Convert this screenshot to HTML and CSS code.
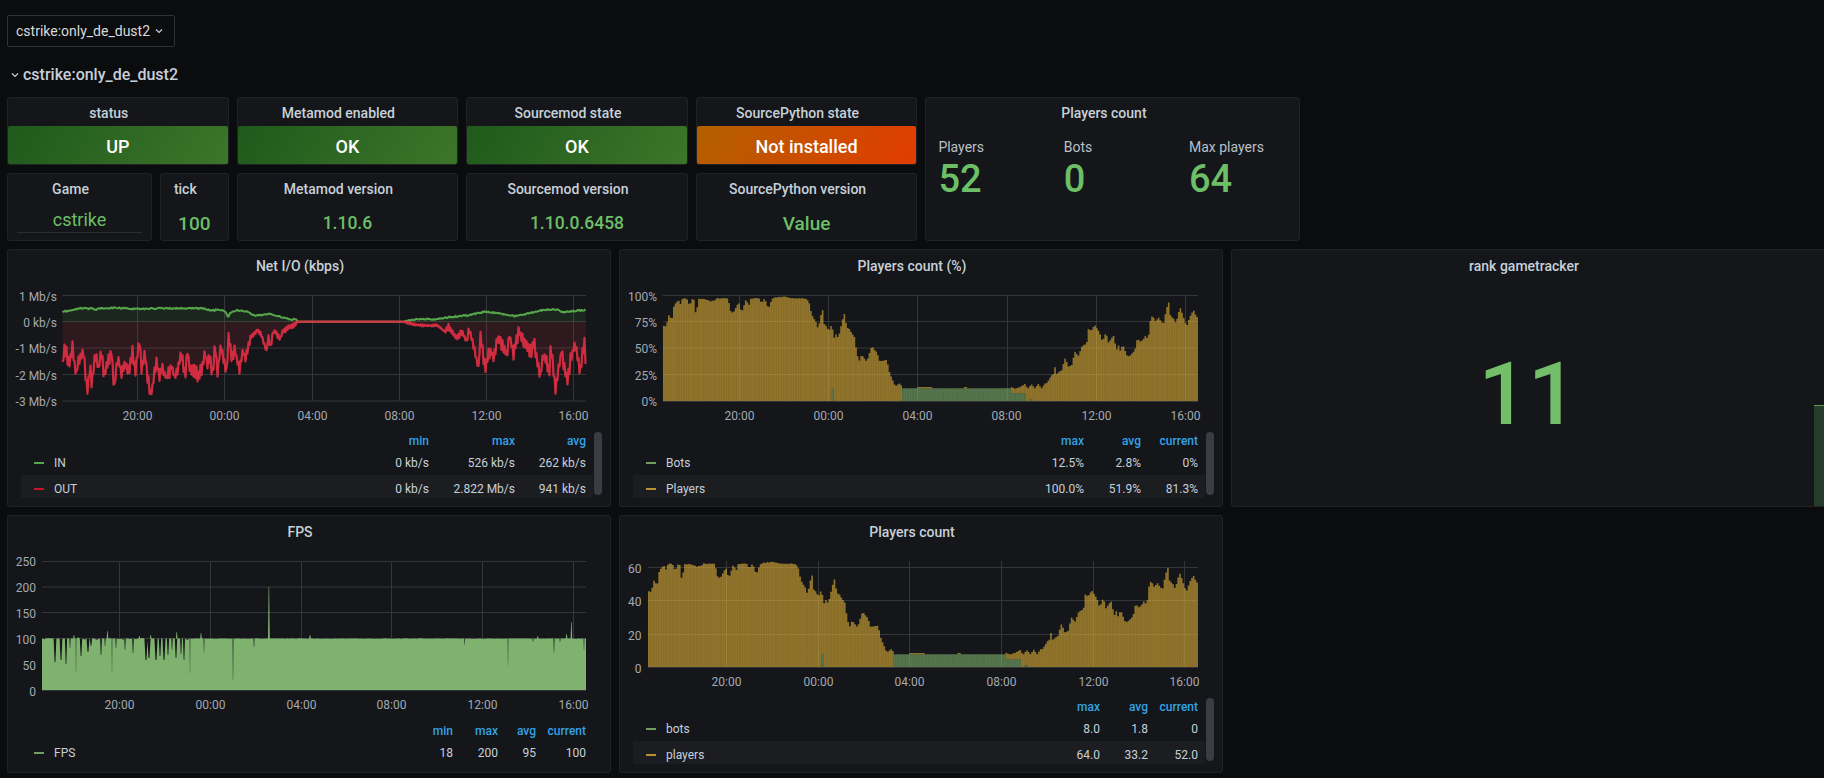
FILE: index.html
```html
<!DOCTYPE html>
<html lang="en">
<head>
<meta charset="utf-8">
<title>cstrike:only_de_dust2</title>
<link rel="stylesheet" href="styles.css">
</head>
<body>
<main class="dash">
  <div class="var-bar">
    <div class="dropdown">cstrike:only_de_dust2
      <svg class="chev" viewBox="0 0 8 6"><path d="M1 1.5 4 4.5 7 1.5"/></svg>
    </div>
  </div>
  <div class="row-title">
    <svg class="chev" viewBox="0 0 8 6"><path d="M1 1.5 4 4.5 7 1.5"/></svg>
    <span>cstrike:only_de_dust2</span>
  </div>

  <section class="stats">
    <div class="panel"><h2 class="title">status</h2><div class="fill ok">UP</div></div>
    <div class="panel"><h2 class="title">Metamod enabled</h2><div class="fill ok">OK</div></div>
    <div class="panel"><h2 class="title">Sourcemod state</h2><div class="fill ok">OK</div></div>
    <div class="panel"><h2 class="title">SourcePython state</h2><div class="fill warn">Not installed</div></div>
    <div class="panel players">
      <h2 class="title">Players count</h2>
      <div class="multi">
        <div class="multi-item"><div class="multi-label">Players</div><div class="multi-num">52</div></div>
        <div class="multi-item"><div class="multi-label">Bots</div><div class="multi-num">0</div></div>
        <div class="multi-item"><div class="multi-label">Max players</div><div class="multi-num">64</div></div>
      </div>
    </div>
    <div class="pair">
      <div class="panel game"><h2 class="title">Game</h2><div class="game-val">cstrike</div></div>
      <div class="panel tick"><h2 class="title">tick</h2><div class="val">100</div></div>
    </div>
    <div class="panel"><h2 class="title">Metamod version</h2><div class="val val-sm">1.10.6</div></div>
    <div class="panel"><h2 class="title">Sourcemod version</h2><div class="val val-sm">1.10.0.6458</div></div>
    <div class="panel"><h2 class="title">SourcePython version</h2><div class="val">Value</div></div>
  </section>

  <section class="chart-row">
    <div class="panel chart">
      <h2 class="title">Net I/O (kbps)</h2>
      <svg class="plot" viewBox="8 282 602 145" width="602" height="145">
        <path class="grid" d="M62.5 295.5H586M62.5 321.5H586M62.5 348H586M62.5 374.5H586M62.5 401H586M137.5 295V401M224.5 295V401M312.5 295V401M399.5 295V401M486.5 295V401M573.5 295V401"/>
        <path id="net-in-fill" class="in-fill"/><path id="net-out-fill" class="out-fill"/>
        <path id="net-in" class="in-line"/><path id="net-out" class="out-line"/>
        <g class="yaxis">
          <text x="57" y="300.5">1 Mb/s</text><text x="57" y="327">0 kb/s</text><text x="57" y="353">-1 Mb/s</text><text x="57" y="380">-2 Mb/s</text><text x="57" y="406">-3 Mb/s</text>
        </g>
        <g class="xaxis">
          <text x="137.5" y="420">20:00</text><text x="224.5" y="420">00:00</text><text x="312.5" y="420">04:00</text><text x="399.5" y="420">08:00</text><text x="486.5" y="420">12:00</text><text x="573.5" y="420">16:00</text>
        </g>
      </svg>
      <div class="legend lg-net">
        <div class="lg-row lg-head"><span></span><span>min</span><span>max</span><span>avg</span></div>
        <div class="lg-row"><span class="lg-name"><i class="dash-mark c-in"></i>IN</span><span>0 kb/s</span><span>526 kb/s</span><span>262 kb/s</span></div>
        <div class="lg-row lg-alt"><span class="lg-name"><i class="dash-mark c-out"></i>OUT</span><span>0 kb/s</span><span>2.822 Mb/s</span><span>941 kb/s</span></div>
        <div class="scroll"></div>
      </div>
    </div>

    <div class="panel chart">
      <h2 class="title">Players count (%)</h2>
      <svg class="plot" viewBox="620 282 602 145" width="602" height="145">
        <path class="grid" d="M663 295.5H1198M663 321.5H1198M663 348H1198M663 374.5H1198M739.5 295V401.7M828.5 295V401.7M917.5 295V401.7M1007.5 295V401.7M1096.5 295V401.7M1185.5 295V401.7"/>
        <path id="pct-bots" class="bots-bars"/><path id="pct-players" class="players-bars"/>
        <path class="grid" d="M663 401.5H1198"/>
        <g class="yaxis">
          <text x="657" y="300.5">100%</text><text x="657" y="327">75%</text><text x="657" y="353">50%</text><text x="657" y="380">25%</text><text x="657" y="406">0%</text>
        </g>
        <g class="xaxis">
          <text x="739.5" y="420">20:00</text><text x="828.5" y="420">00:00</text><text x="917.5" y="420">04:00</text><text x="1006.5" y="420">08:00</text><text x="1096.5" y="420">12:00</text><text x="1185.5" y="420">16:00</text>
        </g>
      </svg>
      <div class="legend lg-pct">
        <div class="lg-row lg-head"><span></span><span>max</span><span>avg</span><span>current</span></div>
        <div class="lg-row"><span class="lg-name"><i class="dash-mark c-bots"></i>Bots</span><span>12.5%</span><span>2.8%</span><span>0%</span></div>
        <div class="lg-row lg-alt"><span class="lg-name"><i class="dash-mark c-players"></i>Players</span><span>100.0%</span><span>51.9%</span><span>81.3%</span></div>
        <div class="scroll"></div>
      </div>
    </div>

    <div class="panel chart rank">
      <h2 class="title">rank gametracker</h2>
      <div class="rank-val">11</div>
      <div class="spark"></div>
    </div>
  </section>

  <section class="chart-row">
    <div class="panel chart">
      <h2 class="title">FPS</h2>
      <svg class="plot" viewBox="8 548 602 169" width="602" height="169">
        <path class="grid" d="M42 561.5H586M42 587H586M42 612.5H586M42 638.5H586M119.5 561V690M210.5 561V690M301.5 561V690M391.5 561V690M482.5 561V690M573.5 561V690"/>
        <path id="fps" class="fps-fill"/>
        <path class="grid" d="M42 690.5H586"/>
        <g class="yaxis">
          <text x="36" y="566">250</text><text x="36" y="592">200</text><text x="36" y="618">150</text><text x="36" y="644">100</text><text x="36" y="670">50</text><text x="36" y="696">0</text>
        </g>
        <g class="xaxis">
          <text x="119.5" y="709">20:00</text><text x="210.5" y="709">00:00</text><text x="301.5" y="709">04:00</text><text x="391.5" y="709">08:00</text><text x="482.5" y="709">12:00</text><text x="573.5" y="709">16:00</text>
        </g>
      </svg>
      <div class="legend lg-fps">
        <div class="lg-row lg-head"><span></span><span>min</span><span>max</span><span>avg</span><span>current</span></div>
        <div class="lg-row"><span class="lg-name"><i class="dash-mark c-bots"></i>FPS</span><span>18</span><span>200</span><span>95</span><span>100</span></div>
      </div>
    </div>

    <div class="panel chart">
      <h2 class="title">Players count</h2>
      <svg class="plot" viewBox="620 548 602 145" width="602" height="145">
        <path class="grid" d="M648 567.5H1198M648 600.5H1198M648 634.5H1198M726.5 561V667.7M818.5 561V667.7M909.5 561V667.7M1001.5 561V667.7M1093.5 561V667.7M1184.5 561V667.7"/>
        <path id="cnt-bots" class="bots-bars"/><path id="cnt-players" class="players-bars"/>
        <path class="grid" d="M648 667.5H1198"/>
        <g class="yaxis">
          <text x="641.5" y="573">60</text><text x="641.5" y="606">40</text><text x="641.5" y="639.5">20</text><text x="641.5" y="673">0</text>
        </g>
        <g class="xaxis">
          <text x="726.5" y="686">20:00</text><text x="818.5" y="686">00:00</text><text x="909.5" y="686">04:00</text><text x="1001.5" y="686">08:00</text><text x="1093.5" y="686">12:00</text><text x="1184.5" y="686">16:00</text>
        </g>
      </svg>
      <div class="legend lg-cnt">
        <div class="lg-row lg-head"><span></span><span>max</span><span>avg</span><span>current</span></div>
        <div class="lg-row"><span class="lg-name"><i class="dash-mark c-bots"></i>bots</span><span>8.0</span><span>1.8</span><span>0</span></div>
        <div class="lg-row lg-alt"><span class="lg-name"><i class="dash-mark c-players"></i>players</span><span>64.0</span><span>33.2</span><span>52.0</span></div>
        <div class="scroll"></div>
      </div>
    </div>
  </section>
</main>
<script src="chart.js"></script>
</body>
</html>
```

FILE: styles.css
```css
* { box-sizing: border-box; }
html, body { margin: 0; height: 100%; overflow: hidden; background: #0b0c0e; }
body { font-family: Roboto, "Liberation Sans", sans-serif; color: #c7d0d9; font-size: 12px; }
.dash { padding-left: 7px; width: 1824px; height: 778px; overflow: hidden; }

.var-bar { padding-top: 15px; height: 47px; }
.dropdown { display: inline-flex; align-items: center; gap: 5px; width: 168px; height: 32px; padding-left: 8px; border: 1px solid #2c3235; border-radius: 2px; font-size: 14px; color: #d8d9da; }
.chev { width: 8px; height: 6px; flex: none; }
.chev path { fill: none; stroke: #c7d0d9; stroke-width: 1.2; }
.row-title { display: flex; align-items: center; gap: 4px; height: 50px; padding: 16px 0 10px 4px; font-size: 16px; font-weight: 500; line-height: 24px; color: #c7d0d9; }

.panel { background: #141619; border: 1px solid #202226; border-radius: 3px; min-width: 0; }
.title { margin: 0; height: 28px; padding-right: 18px; font-size: 14px; font-weight: 500; line-height: 30px; text-align: center; color: #c7d0d9; white-space: nowrap; }

.stats { display: grid; grid-template-columns: repeat(4, 221.6px) 375px; grid-template-rows: 68px 68px; gap: 8px; }
.fill { height: 38px; border-radius: 2px; font-size: 18px; font-weight: 500; line-height: 41px; text-align: center; color: #fff; }
.ok { background: linear-gradient(120deg, #1f5a1c, #3d7529); }
.warn { background: linear-gradient(120deg, #b26000, #e23c00); }
.val { padding-top: 5px; font-size: 19px; font-weight: 500; line-height: 33px; text-align: center; color: #6cbf66; }
.val-sm { font-size: 17.5px; }
.pair { display: flex; gap: 8px; }
.game { width: 145px; flex: none; }
.tick { flex: 1; }
.game-val { margin: 2px 9px 0; height: 29px; border-bottom: 1px solid #2a2c30; font-size: 18px; line-height: 32px; text-align: center; color: #6cbf66; }
.players { grid-column: 5; grid-row: 1 / 3; }
.multi { display: flex; padding: 11px 0 0 12px; }
.multi-item { flex: 0 0 125.3px; }
.multi-label { font-size: 14px; line-height: 20px; color: #b9c0c8; }
.multi-num { margin-top: 2px; font-size: 38px; font-weight: 500; line-height: 40px; color: #6cbf66; }

.chart-row { display: flex; gap: 8px; margin-top: 8px; }
.chart { position: relative; flex: 0 0 604px; height: 258px; }
.chart .title { height: 32px; line-height: 33px; }
.plot { display: block; }
.plot text { font-size: 12px; fill: #a3a9b2; }
.yaxis text { text-anchor: end; }
.xaxis text { text-anchor: middle; }
.grid { fill: none; stroke: #34363a; stroke-width: 1; }

.in-fill { fill: #56a64b; fill-opacity: .12; }
.out-fill { fill: #e02f44; fill-opacity: .13; }
.in-line { fill: none; stroke: #56a64b; stroke-width: 2; stroke-linejoin: round; }
.out-line { fill: none; stroke: #e02f44; stroke-width: 2.2; stroke-linejoin: round; stroke-opacity: .92; }
.bots-bars { fill: #7eb26d; fill-opacity: .62; }
.players-bars { fill: #eab839; fill-opacity: .58; }
.fps-fill { fill: #80b26f; }

.legend { position: relative; margin-left: 13px; width: 572px; }
.lg-row { display: grid; grid-template-columns: var(--cols); align-items: center; height: 23px; margin-bottom: 3px; padding: 4px 7px 0 0; color: #c7d0d9; font-size: 12px; text-align: right; }
.lg-head { height: 22px; margin-bottom: 0; padding-top: 6px; font-weight: 500; color: #33a2e5; }
.lg-alt { background: #1b1d21; }
.lg-name { display: flex; align-items: center; padding-left: 13px; text-align: left; }
.dash-mark { width: 10px; height: 2px; margin-right: 10px; flex: none; }
.c-in { background: #56a64b; }
.c-out { background: #c4162a; }
.c-bots { background: #6d9f5e; }
.c-players { background: #b8922e; }
.lg-net { --cols: 1fr 60px 86px 71px; }
.lg-pct { --cols: 1fr 60px 57px 57px; }
.lg-cnt { --cols: 1fr 60px 48px 50px; }
.lg-fps { --cols: 1fr 50px 45px 38px 50px; }
.scroll { position: absolute; top: 5px; left: 573px; width: 8px; height: 63px; border-radius: 4px; background: #3a3c46; }

.rank-val { display: flex; align-items: center; justify-content: center; height: 224px; padding-right: 10px; font-size: 87px; font-weight: 500; line-height: 1; color: #73bf69; }
.spark { position: absolute; top: 155px; left: 582px; width: 30px; height: 101px; background: #263c2a; border-top: 1px solid #5f9a58; }
```

FILE: chart.js
```js
(function () {
  var seed = 12345;
  function rnd() {
    seed = (seed + 0x6d2b79f5) | 0;
    var t = Math.imul(seed ^ (seed >>> 15), 1 | seed);
    t = (t + Math.imul(t ^ (t >>> 7), 61 | t)) ^ t;
    return ((t ^ (t >>> 14)) >>> 0) / 4294967296;
  }
  function noise(a) { return (rnd() * 2 - 1) * a; }
  function map(arr, ox, oy) { return arr.map(function (p) { return [ox + p[0] / 3, oy + p[1] / 3]; }); }
  function interp(pts, x) {
    if (x <= pts[0][0]) return pts[0][1];
    for (var i = 1; i < pts.length; i++) {
      if (x <= pts[i][0]) {
        var a = pts[i - 1], b = pts[i];
        return a[1] + (b[1] - a[1]) * (x - a[0]) / ((b[0] - a[0]) || 1);
      }
    }
    return pts[pts.length - 1][1];
  }
  function set(id, d) { document.getElementById(id).setAttribute('d', d); }
  function fx(n) { return n.toFixed(2); }

  /* ---- Net I/O: values read off the reference, in reference pixels ---- */
  var inPts = map([[8,50],[20,48],[50,42],[75,38],[85,42],[95,40],[105,45],[115,40],[170,38],[230,42],[280,40],[340,40],[430,40],[460,47],[475,42],[495,50],[505,68],[510,52],[530,45],[560,50],[585,62],[625,57],[660,65],[690,72],[710,75],[712,80]], 60, 295)
    .concat(map([[220,80],[260,72],[310,73],[370,65],[420,60],[465,50],[500,54],[555,63],[600,55],[630,46],[680,43],[700,52],[770,44]], 330, 295));
  var outPts = map([[8,210],[12,155],[20,175],[27,215],[37,152],[48,240],[55,205],[70,175],[82,288],[90,210],[95,280],[105,170],[115,225],[125,170],[132,255],[142,205],[155,170],[162,290],[172,190],[185,230],[195,200],[205,235],[218,165],[225,235],[238,140],[245,230],[255,165],[262,240],[272,305],[290,200],[298,255],[305,215],[320,250],[335,215],[345,250],[365,175],[375,250],[382,165],[392,235],[405,225],[412,240],[425,225],[435,170],[442,210],[450,190],[458,240],[465,150],[472,235],[482,160],[490,185],[500,240],[505,120],[515,185],[525,165],[537,225],[550,165],[555,190],[570,130],[582,115],[592,105],[605,120],[620,170],[625,125],[632,160],[640,105],[660,130],[668,110],[690,95],[705,90],[712,80]], 60, 295)
    .concat(map([[220,80],[260,90],[300,92],[320,90],[345,110],[355,95],[380,130],[395,110],[410,140],[417,100],[430,150],[447,225],[450,120],[465,220],[480,165],[490,185],[503,130],[520,160],[530,180],[538,115],[550,175],[567,105],[585,150],[605,170],[612,145],[625,210],[632,240],[640,175],[660,235],[662,150],[677,285],[695,165],[705,235],[713,260],[722,190],[735,150],[750,225],[763,140],[770,250]], 330, 295));
  var zero = 321.7, inD = '', outD = '', flip = 1;
  for (var x = 62.5; x <= 586; x += 1) {
    var flat = x > 298 && x < 403;
    var yi = flat ? zero : interp(inPts, x) + noise(0.7);
    var amp = x < 250 ? 8 : x < 297 ? 3 : x > 480 ? 8 : x > 445 ? 4 : 1.2;
    flip = -flip;
    var yo = flat ? zero : interp(outPts, x) + flip * (0.25 + rnd()) * amp * 0.7;
    inD += (inD ? 'L' : 'M') + fx(x) + ' ' + fx(Math.min(yi, zero));
    outD += (outD ? 'L' : 'M') + fx(x) + ' ' + fx(Math.max(yo, zero));
  }
  set('net-in', inD);
  set('net-out', outD);
  set('net-in-fill', inD + 'L586 ' + zero + 'L62.5 ' + zero + 'Z');
  set('net-out-fill', outD + 'L586 ' + zero + 'L62.5 ' + zero + 'Z');

  /* ---- Players: one envelope, drawn in both the % and the count chart ---- */
  var left = map([[10,85],[12,115],[20,105],[28,68],[35,95],[42,48],[55,30],[62,42],[68,25],[85,28],[88,50],[95,28],[103,28],[108,78],[116,25],[140,28],[150,35],[165,30],[170,25],[205,25],[210,60],[220,70],[232,45],[238,40],[245,70],[250,50],[258,30],[268,45],[270,25],[298,25],[305,40],[315,25],[325,58],[335,30],[345,22],[380,20],[400,25],[440,25],[450,45],[455,75],[470,98],[475,120],[480,85],[488,60],[495,120],[500,100],[505,125],[517,100],[520,150],[530,130],[535,145],[545,100],[553,70],[560,110],[570,120],[585,145],[590,185],[597,215],[605,195],[620,215],[635,170],[650,185],[660,215],[680,210],[690,250],[705,288],[720,280],[728,295]], 660, 290);
  var right = map([[243,290],[255,295],[270,292],[285,282],[292,296],[305,285],[315,295],[325,283],[335,295],[342,282],[350,280],[365,255],[374,250],[376,220],[378,255],[395,240],[405,205],[415,228],[425,225],[435,185],[445,200],[455,170],[470,160],[475,115],[483,125],[495,105],[505,120],[510,130],[517,155],[528,125],[535,160],[550,135],[560,180],[565,165],[572,185],[578,160],[590,195],[598,200],[615,180],[622,145],[630,155],[640,150],[645,135],[655,150],[658,100],[668,75],[675,95],[685,82],[695,95],[703,100],[708,60],[716,35],[722,80],[730,85],[738,100],[750,50],[760,80],[770,108],[780,80],[790,60],[803,85]], 930, 290);
  var BASE = 401.7, SPAN = 106.4, X0 = 663, W = 535, COUNT = 320;
  var capA = [917, 932], capB = [964.5, 968], bot = 388.3;
  var samples = [];
  for (var i = 0; i < COUNT; i++) {
    var px = X0 + (i + 0.5) * W / COUNT;
    var s = { t: i / COUNT, gTop: null, gBot: 0, green: 0 };
    if (px < 902.7) {
      s.gTop = (BASE - (interp(left, px) + noise(0.5))) / SPAN;
      if (Math.abs(px - 832.5) < 0.84) { s.green = 0.125; s.gBot = 0.125; }
    } else if (px < 1011) {
      s.green = (BASE - bot) / SPAN;
      if ((px > capA[0] && px < capA[1]) || (px > capB[0] && px < capB[1])) {
        s.gTop = (BASE - bot + 1.3) / SPAN;
        s.gBot = (BASE - bot) / SPAN;
      }
    } else if (px < 1025) {
      s.green = (BASE - 393.3) / SPAN;
      s.gTop = (BASE - (interp(right, px) + noise(0.4))) / SPAN;
      s.gBot = s.green;
    } else {
      s.gTop = (BASE - (interp(right, px) + noise(0.5))) / SPAN;
      if (px > 1029 && px < 1032) { s.green = 0.02; s.gBot = 0.02; }
    }
    samples.push(s);
  }
  function bars(idB, idP, x0, w, base, h) {
    var step = w / samples.length, bw = step * 0.97, b = '', p = '';
    samples.forEach(function (s) {
      var x = x0 + s.t * w;
      if (s.green) {
        b += 'M' + fx(x) + ' ' + fx(base - s.green * h) + 'h' + fx(bw) + 'V' + base + 'h-' + fx(bw) + 'Z';
      }
      if (s.gTop !== null) {
        p += 'M' + fx(x) + ' ' + fx(base - s.gTop * h) + 'h' + fx(bw) + 'V' + fx(base - s.gBot * h) + 'h-' + fx(bw) + 'Z';
      }
    });
    set(idB, b);
    set(idP, p);
  }
  bars('pct-bots', 'pct-players', 663, 535, 401.7, 106.4);
  bars('cnt-bots', 'cnt-players', 648, 550, 667.7, 107.1);

  /* ---- FPS: flat at 100, with dips and spikes (x, y of tip, half width) ---- */
  var B = 690.3, L100 = 638.6;
  var marks = [
    [55,662,1.4],[61,660,1.4],[66,664,1.1],[70,648,.6],[81,656,1.2],[88,652,1.5],[91,646,1.1],[101,655,.9],[105,646,.6],[116,648,.6],[125,650,.7],[133,653,.8],
    [146,660,1.6],[149,658,1.6],[156,660,1.6],[160,656,1.2],[164,660,1.5],[168,655,1.1],[172,650,.7],[176,658,1.2],[181,654,.9],[184,660,1],[190,673,.3],[204,653,.4],
    [76,672,.3],[233,680,.4],[254,647,.5],[464.6,645,.4],[508,665,.3],[554,653,.5],[584,650,.4],[533,642,.5],[560,642,.5],[112,672,.3],
    [74,635,.8],[107.5,631,.8],[139.3,636,.8],[150.7,635,.8],[176.7,632,.8],[201,633,.8],[268.9,587,.9],[310,635,.9],[537.8,636,.8],[566.6,634,.8],[571.4,622,.8]
  ].sort(function (a, c) { return a[0] - c[0]; });
  var d = 'M42 ' + B + 'L42 ' + L100;
  var wob = 42;
  marks.forEach(function (m) {
    while (wob < m[0] - m[2] - 1) {
      wob += 2.2;
      if (wob >= m[0] - m[2] - 1) break;
      var band = wob < 190 ? 1.4 : 0.25;
      d += 'L' + fx(wob) + ' ' + fx(L100 + noise(band));
    }
    var q = m[2] * 0.3;
    d += 'L' + fx(m[0] - m[2]) + ' ' + L100 + 'L' + fx(m[0] - q) + ' ' + m[1] + 'L' + fx(m[0] + q) + ' ' + m[1] + 'L' + fx(m[0] + m[2]) + ' ' + L100;
    wob = m[0] + m[2];
  });
  d += 'L586 ' + L100 + 'L586 ' + B + 'Z';
  set('fps', d);
})();
```
